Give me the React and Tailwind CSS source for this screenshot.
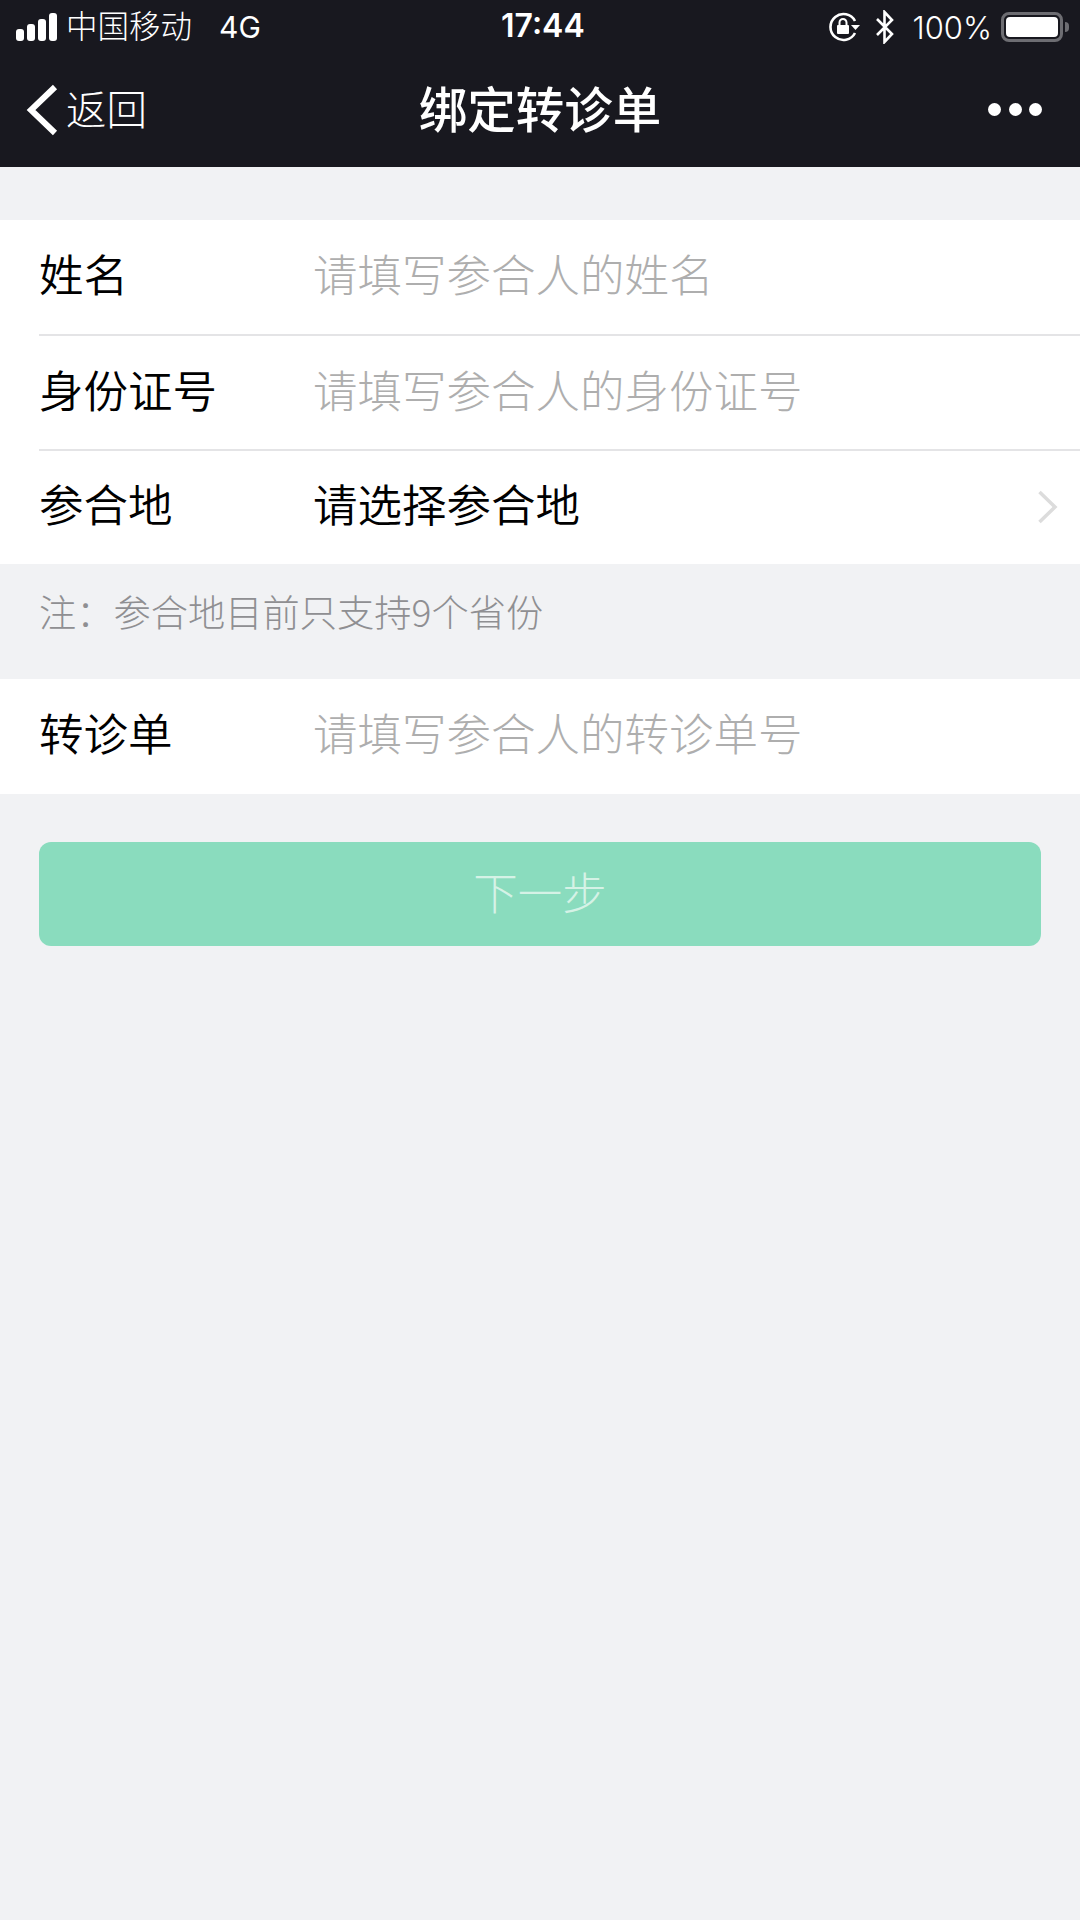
const font = { fontFamily: '"Noto Sans CJK SC", sans-serif' };

function Row({ label, value, placeholder = true, chevron = false, divider = false, height = "h-[115px]" }) {
  return (
    <div className={`relative ${height} flex items-center pl-[39px] pb-[9px] bg-white`}>
      <div className="w-[274px] text-[44.5px] leading-none text-black font-[350]">{label}</div>
      <div className={`text-[44.5px] leading-none ${placeholder ? "text-[#aeaeae] font-[300]" : "text-black font-[350]"}`}>{value}</div>
      {chevron && (
        <svg className="absolute right-[20px] top-[38px]" width="24" height="36" viewBox="0 0 24 36" fill="none">
          <path d="M3.5 3 L19 18 L3.5 33" stroke="#dcdcdc" strokeWidth="3.5" />
        </svg>
      )}
      {divider && <div className="absolute left-[39px] right-0 bottom-0 h-[2px] bg-[#e4e4e6]" />}
    </div>
  );
}

export default function App() {
  return (
    <div style={font} className="w-[1080px] h-[1920px] bg-[#f1f2f4] flex flex-col overflow-hidden">
      <header className="h-[167px] bg-[#18181f] text-white flex flex-col shrink-0">
        <div className="h-[54px] flex items-center justify-between pl-[16px] pr-[11px] relative">
          <div className="flex items-center">
            <svg width="42" height="28" viewBox="0 0 42 28" fill="#fff">
              <rect x="0" y="16" width="8" height="12" rx="3" />
              <rect x="11" y="11" width="8" height="17" rx="3" />
              <rect x="22" y="6" width="8" height="22" rx="3" />
              <rect x="33" y="0" width="8" height="28" rx="3" />
            </svg>
            <span className="ml-[8px] pb-[5px] text-[31.5px] leading-none font-[300]">中国移动</span>
            <span className="ml-[27px] text-[30px] leading-none font-[400]" style={{ fontFamily: "Inter, sans-serif" }}>4G</span>
          </div>
          <div className="absolute left-[501px] top-[8px] text-[32px] leading-[36px] font-[600]" style={{ fontFamily: "Inter, sans-serif" }}>17:44</div>
          <div className="flex items-center">
            <svg width="32" height="30" viewBox="0 0 32 30" fill="none">
              <path d="M27 9 A13 13 0 1 0 27 21" stroke="#fff" strokeWidth="2.6" />
              <path d="M23 13 L27.5 18 L32 13 Z" fill="#fff" />
              <rect x="9" y="13" width="12" height="9" rx="1" fill="#fff" />
              <path d="M11.5 13 V10.5 A3.5 3.5 0 0 1 18.5 10.5 V13" stroke="#fff" strokeWidth="2" />
            </svg>
            <svg className="ml-[15px]" width="20" height="34" viewBox="0 0 20 34" fill="none">
              <path d="M2 9 L17 24 L9.5 32 V2 L17 10 L2 25" stroke="#fff" strokeWidth="2.6" />
            </svg>
            <span className="ml-[17px] text-[31px] leading-none font-[300]" style={{ fontFamily: "Inter, sans-serif" }}>100%</span>
            <div className="ml-[9px] w-[62px] h-[30px] rounded-[8px] border-[3px] border-[#6d6d72] p-[2px]">
              <div className="w-full h-full bg-white rounded-[4px]" />
            </div>
            <div className="ml-[2px] w-[4px] h-[10px] bg-[#6d6d72] rounded-r-[4px]" />
          </div>
        </div>
        <div className="relative flex-1 flex items-center">
          <svg className="absolute left-[25px] top-[30px]" width="34" height="52" viewBox="0 0 34 52" fill="none">
            <path d="M30 3 L6 26 L30 49" stroke="#fff" strokeWidth="6" />
          </svg>
          <span className="absolute left-[66px] top-[27px] text-[40.5px] leading-[54px] font-[300]">返回</span>
          <div className="w-full pb-[7px] text-center text-[48.5px] leading-none font-[500]">绑定转诊单</div>
          <div className="absolute left-[988px] top-[49px] flex gap-[7.5px]">
            <div className="w-[13px] h-[13px] rounded-full bg-white" />
            <div className="w-[13px] h-[13px] rounded-full bg-white" />
            <div className="w-[13px] h-[13px] rounded-full bg-white" />
          </div>
        </div>
      </header>

      <div className="mt-[53px]">
        <Row label="姓名" value="请填写参合人的姓名" divider height="h-[116px]" />
        <Row label="身份证号" value="请填写参合人的身份证号" divider />
        <Row label="参合地" value="请选择参合地" placeholder={false} chevron height="h-[113px]" />
      </div>

      <div className="h-[115px] flex items-center pl-[39px] pb-[20px] text-[37.25px] leading-none text-[#8f8f92] font-[300]">注：参合地目前只支持9个省份</div>

      <Row label="转诊单" value="请填写参合人的转诊单号" />

      <button className="mt-[48px] mx-[39px] h-[104px] rounded-[12px] bg-[#8adcbe] text-[44.5px] text-[#d5f2e6] font-[300] flex items-center justify-center pb-[6px]">下一步</button>
    </div>
  );
}
